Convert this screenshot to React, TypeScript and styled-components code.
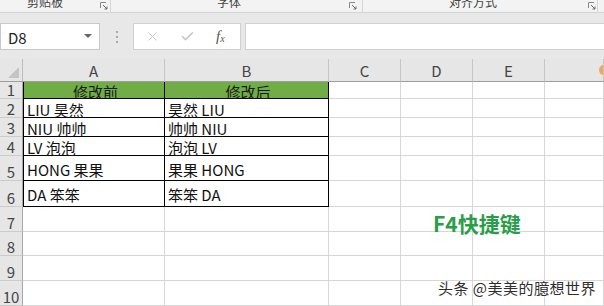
import React from 'react';
import styled, { createGlobalStyle } from 'styled-components';
import { X, Check } from 'lucide-react';

const GlobalStyle = createGlobalStyle`
  html, body { margin: 0; padding: 0; background: #fff; overflow: hidden; }
  * { box-sizing: border-box; }
`;

const FONT = `"Noto Sans CJK SC", "Noto Sans", sans-serif`;

const Page = styled.div`
  position: relative;
  width: 604px;
  height: 306px;
  overflow: hidden;
  background: #fff;
  font-family: ${FONT};
  display: flex;
  flex-direction: column;
`;

/* ---------- ribbon ---------- */
const Ribbon = styled.div`
  display: flex;
  height: 13px;
  background: #f3f3f3;
  border-bottom: 1px solid #d4d4d4;
  overflow: hidden;
  flex-shrink: 0;
`;

const Group = styled.div<{ $w: number; $pad: number; $end: number }>`
  display: flex;
  align-items: flex-start;
  width: ${(p) => p.$w}px;
  height: 12px;
  padding-left: ${(p) => p.$pad}px;
  padding-right: ${(p) => p.$end}px;
  border-right: 1px solid #d6d6d6;
  flex-shrink: 0;
`;

const GroupLabel = styled.span`
  font-size: 12px;
  line-height: 12px;
  margin-top: -4px;
  margin-right: auto;
  color: #444;
  white-space: nowrap;
`;

const LauncherSvg = styled.svg`
  width: 8px;
  height: 8px;
  margin-top: 2px;
  flex-shrink: 0;
`;

const Launcher = () => (
  <LauncherSvg viewBox="0 0 8 8">
    <path d="M0.5 6V0.5H6" fill="none" stroke="#8a8a8a" strokeWidth="1" />
    <path d="M3 3L7 7M7 4.5V7H4.5" fill="none" stroke="#6a6a6a" strokeWidth="1" />
  </LauncherSvg>
);

/* ---------- formula bar ---------- */
const FormulaArea = styled.div`
  display: flex;
  align-items: flex-start;
  height: 46px;
  padding-top: 10px;
  background: #e8e8e8;
  flex-shrink: 0;
`;

const NameBox = styled.div`
  display: flex;
  align-items: center;
  justify-content: space-between;
  width: 100px;
  height: 27px;
  padding: 1px 7px 0 7px;
  background: #fff;
  border: 1px solid #c8c8c8;
  font-size: 15px;
  color: #222;
`;

const Caret = styled.span`
  width: 0;
  height: 0;
  border-left: 4px solid transparent;
  border-right: 4px solid transparent;
  border-top: 4px solid #666;
  margin-top: -2px;
`;

const Grip = styled.div`
  width: 33px;
  height: 27px;
  display: flex;
  flex-direction: column;
  align-items: center;
  justify-content: center;
  gap: 3px;
`;

const GripDot = styled.span`
  width: 2px;
  height: 2px;
  background: #a8a8a8;
`;

const ButtonBox = styled.div`
  display: flex;
  align-items: center;
  width: 108px;
  height: 27px;
  padding-left: 11px;
  gap: 20px;
  background: #fff;
  border: 1px solid #d0d0d0;
  color: #c6c6c6;
`;

const Fx = styled.span`
  font-family: "Liberation Serif", serif;
  font-style: italic;
  font-size: 15px;
  color: #555;
  margin-left: 1px;
  sub {
    font-size: 10px;
    vertical-align: -1px;
  }
`;

const FormulaInput = styled.div`
  flex: 1;
  height: 27px;
  margin-left: 4px;
  background: #fff;
  border: 1px solid #d0d0d0;
  border-right: none;
`;

/* ---------- grid ---------- */
const Sheet = styled.div`
  display: grid;
  grid-template-columns: 23px 142px 164px 72px 72px 72px 1fr;
  grid-template-rows: 23px 17px 19px 19px 19px 25px 26px 25px 24px 25px 25px;
  flex: 1;
`;

const Corner = styled.div`
  background: #e6e6e6;
  border-right: 1px solid #bcbcbc;
  border-bottom: 1px solid #9e9e9e;
  display: flex;
  align-items: flex-end;
  justify-content: flex-end;
  padding: 0 3px 3px 0;
`;

const CornerTri = styled.span`
  width: 0;
  height: 0;
  border-left: 11px solid transparent;
  border-bottom: 11px solid #c4c4c4;
`;

const ColHead = styled.div`
  position: relative;
  background: #e6e6e6;
  border-right: 1px solid #c6c6c6;
  border-bottom: 1px solid #9e9e9e;
  display: flex;
  align-items: center;
  justify-content: center;
  padding-top: 2px;
  font-size: 15px;
  line-height: 16px;
  color: #444;
  overflow: hidden;
`;

const OrangeMark = styled.span`
  position: absolute;
  right: -5px;
  top: 6px;
  width: 9px;
  height: 10px;
  border-radius: 50%;
  background: #f0a860;
`;

const RowHead = styled.div`
  background: #e6e6e6;
  border-right: 1px solid #a8a8a8;
  border-bottom: 1px solid #cbcbcb;
  display: flex;
  align-items: flex-end;
  justify-content: center;
  font-size: 15px;
  line-height: 16px;
  color: #444;
`;

const Cell = styled.div<{ $table?: boolean; $first?: boolean; $head?: boolean }>`
  display: flex;
  align-items: center;
  justify-content: ${(p) => (p.$head ? 'center' : 'flex-start')};
  padding: 3px 0 0 3px;
  font-size: 15px;
  line-height: 16px;
  white-space: nowrap;
  color: ${(p) => (p.$head ? '#1a1a1a' : '#111')};
  background: ${(p) => (p.$head ? '#70ad47' : '#fff')};
  border-right: 1px solid ${(p) => (p.$table ? '#000' : '#d6d6d6')};
  border-bottom: 1px solid ${(p) => (p.$table ? '#000' : '#d6d6d6')};
  border-left: ${(p) => (p.$first ? '1px solid #000' : 'none')};
`;

const Note = styled.div`
  position: absolute;
  left: 433px;
  top: 211px;
  font-size: 21px;
  line-height: 24px;
  font-weight: 700;
  color: #2a9d4a;
  white-space: nowrap;
`;

const Watermark = styled.div`
  position: absolute;
  left: 438px;
  top: 279px;
  font-size: 15px;
  line-height: 18px;
  letter-spacing: 0.5px;
  color: #2e2e2e;
  white-space: nowrap;
  text-shadow: 0 0 2px #fff, 0 0 2px #fff, 0 0 1px #fff;
`;

const columns = ['A', 'B', 'C', 'D', 'E', 'F'];

const data: [string, string][] = [
  ['修改前', '修改后'],
  ['LIU 昊然', '昊然 LIU'],
  ['NIU 帅帅', '帅帅 NIU'],
  ['LV 泡泡', '泡泡 LV'],
  ['HONG 果果', '果果 HONG'],
  ['DA 笨笨', '笨笨 DA'],
];

export default function App() {
  const rows = Array.from({ length: 10 }, (_, i) => i + 1);
  return (
    <Page>
      <GlobalStyle />
      <Ribbon>
        <Group $w={111} $pad={27} $end={2}>
          <GroupLabel>剪贴板</GroupLabel>
          <Launcher />
        </Group>
        <Group $w={252} $pad={106} $end={5}>
          <GroupLabel>字体</GroupLabel>
          <Launcher />
        </Group>
        <Group $w={235} $pad={86} $end={1}>
          <GroupLabel>对齐方式</GroupLabel>
          <Launcher />
        </Group>
      </Ribbon>

      <FormulaArea>
        <NameBox>
          <span>D8</span>
          <Caret />
        </NameBox>
        <Grip>
          <GripDot />
          <GripDot />
          <GripDot />
        </Grip>
        <ButtonBox>
          <X size={15} strokeWidth={1.6} />
          <Check size={15} strokeWidth={2.4} />
          <Fx>
            f<sub>x</sub>
          </Fx>
        </ButtonBox>
        <FormulaInput />
      </FormulaArea>

      <Sheet>
        <Corner>
          <CornerTri />
        </Corner>
        {columns.map((c) => (
          <ColHead key={c}>
            {c === 'F' ? <OrangeMark /> : c}
          </ColHead>
        ))}
        {rows.map((r) => {
          const row = data[r - 1];
          return (
            <React.Fragment key={r}>
              <RowHead>{r}</RowHead>
              {columns.map((c, ci) => {
                const inTable = !!row && ci < 2;
                return (
                  <Cell
                    key={c}
                    $table={inTable}
                    $first={inTable && ci === 0}
                    $head={inTable && r === 1}
                  >
                    {inTable ? row[ci] : null}
                  </Cell>
                );
              })}
            </React.Fragment>
          );
        })}
      </Sheet>

      <Note>F4快捷键</Note>
      <Watermark>头条 @美美的臆想世界</Watermark>
    </Page>
  );
}
